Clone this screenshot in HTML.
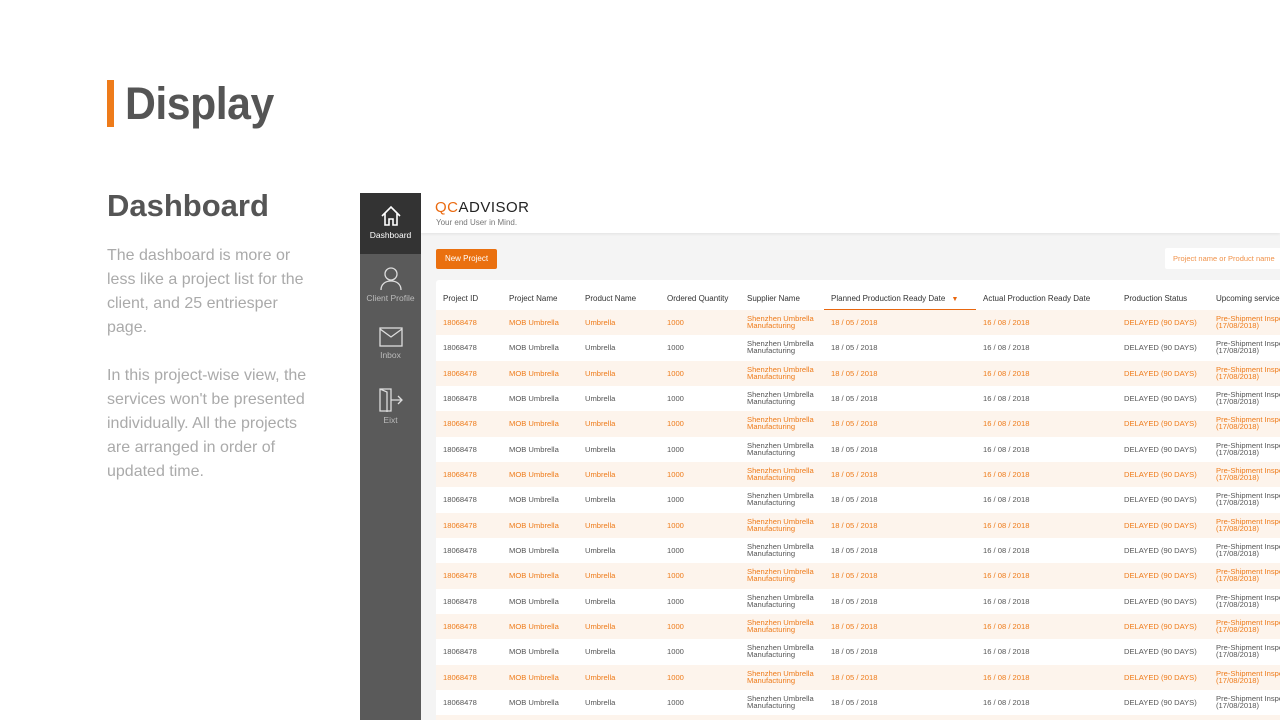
<!DOCTYPE html>
<html><head><meta charset="utf-8"><style>
*{margin:0;padding:0;box-sizing:border-box}
body{width:1280px;height:720px;overflow:hidden;background:#fff;font-family:"Liberation Sans",sans-serif;position:relative}
.bar{position:absolute;left:107px;top:80px;width:7px;height:47px;background:#ee7b1a}
h1{position:absolute;left:125px;top:78px;font-size:45px;font-weight:bold;color:#555;letter-spacing:-0.5px;transform:scaleX(.95);transform-origin:left}
h2{position:absolute;left:107px;top:188px;font-size:31px;font-weight:bold;color:#555}
.p{position:absolute;left:107px;width:215px;font-size:16px;line-height:24px;color:#aaa}
.side{position:absolute;left:360px;top:193px;width:61px;height:527px;background:#5a5a5a}
.nav{position:absolute;left:0;width:61px;height:61px;text-align:center;color:#bbb;font-size:8.5px}
.nav svg{display:block;margin:12px auto 3px}
.main{position:absolute;left:421px;top:193px;width:859px;height:527px;background:#f4f4f4;overflow:hidden}
.hdr{position:absolute;left:0;top:0;width:859px;height:40px;background:#fff;box-shadow:0 1px 3px rgba(0,0,0,.08)}
.btn{position:absolute;left:15px;top:56px;width:61px;height:20px;background:#ea700f;color:#fff;font-size:8px;line-height:20px;text-align:center;border-radius:2px}
.search{position:absolute;left:744px;top:55px;width:120px;height:21px;background:#fff;color:#f0924a;font-size:7.5px;line-height:21px;padding-left:8px;border-radius:2px}
.card{position:absolute;left:15px;top:87px;width:850px;height:450px;background:#fff;border-radius:3px}
.c{position:absolute;font-size:7.6px;color:#555;white-space:nowrap;line-height:7px}
.row{position:absolute;left:0;width:850px;height:25.3px}
.o{background:#fdf4ec}
.o .c{color:#ee7b1a}
.th{position:absolute;top:14px;font-size:8px;color:#333;white-space:nowrap}
</style></head><body>
<div class="bar"></div><h1>Display</h1>
<h2>Dashboard</h2>
<div class="p" style="top:244px">The dashboard is more or less like a project list for the client, and 25 entriesper page.</div>
<div class="p" style="top:364px">In this project-wise view, the services won't be presented individually. All the projects are arranged in order of updated time.</div>
<div class="side">
<div class="nav" style="top:0;background:#333;color:#fff"><svg width="22" height="22" viewBox="0 0 22 22" fill="none" stroke="#fff" stroke-width="1.6"><path d="M2 11L11 2l9 9M5 8.5V20h4v-6h4v6h4V8.5"/></svg>Dashboard</div>
<div class="nav" style="top:61px"><svg width="24" height="24" viewBox="0 0 24 24" fill="none" stroke="#ddd" stroke-width="1.3"><circle cx="12" cy="8" r="6"/><path d="M2 24c0-6 4.5-9 10-9s10 3 10 9"/></svg>Client Profile</div>
<div class="nav" style="top:122px"><svg width="24" height="20" viewBox="0 0 24 20" fill="none" stroke="#ddd" stroke-width="1.3"><rect x="1" y="1" width="22" height="18"/><path d="M1 2l11 8 11-8"/></svg>Inbox</div>
<div class="nav" style="top:183px"><svg width="26" height="24" viewBox="0 0 26 24" fill="none" stroke="#ddd" stroke-width="1.3"><path d="M2 1h11v22H2zM2 1l7 3v20M13 12h11M20 8l4 4-4 4"/></svg>Eixt</div>
</div>
<div class="main">
<div class="hdr"><div style="position:absolute;left:14px;top:6px;font-size:15px;letter-spacing:.5px;color:#222"><span style="color:#ea6a10">QC</span>ADVISOR</div><div style="position:absolute;left:15px;top:25px;font-size:8px;color:#777">Your end User in Mind.</div></div>
<div class="btn">New Project</div>
<div class="search">Project name or Product name</div>
<div class="card" id="card">
<div class="th" style="left:7px">Project ID</div>
<div class="th" style="left:73px">Project Name</div>
<div class="th" style="left:149px">Product Name</div>
<div class="th" style="left:231px">Ordered Quantity</div>
<div class="th" style="left:311px">Supplier Name</div>
<div class="th" style="left:395px">Planned Production Ready Date <span style="color:#e8670f;font-size:7px;margin-left:4px">▼</span></div>
<div style="position:absolute;left:388px;top:29px;width:152px;height:1px;background:#e8670f"></div>
<div class="th" style="left:547px">Actual Production Ready Date</div>
<div class="th" style="left:688px">Production Status</div>
<div class="th" style="left:780px">Upcoming service</div>
</div>
</div>
<script>
var card=document.getElementById('card'),h='';
for(var i=0;i<17;i++){var t=30+i*25.33;
h+='<div class="row'+(i%2==0?' o':'')+'" style="top:'+t+'px">'+
'<div class="c" style="left:7px;top:9px">18068478</div>'+
'<div class="c" style="left:73px;top:9px">MOB Umbrella</div>'+
'<div class="c" style="left:149px;top:9px">Umbrella</div>'+
'<div class="c" style="left:231px;top:9px">1000</div>'+
'<div class="c" style="left:311px;top:5px">Shenzhen Umbrella<br>Manufacturing</div>'+
'<div class="c" style="left:395px;top:9px">18 / 05 / 2018</div>'+
'<div class="c" style="left:547px;top:9px">16 / 08 / 2018</div>'+
'<div class="c" style="left:688px;top:9px">DELAYED (90 DAYS)</div>'+
'<div class="c" style="left:780px;top:5px">Pre-Shipment Inspection<br>(17/08/2018)</div></div>';}
card.insertAdjacentHTML('beforeend',h);
</script>
</body></html>
